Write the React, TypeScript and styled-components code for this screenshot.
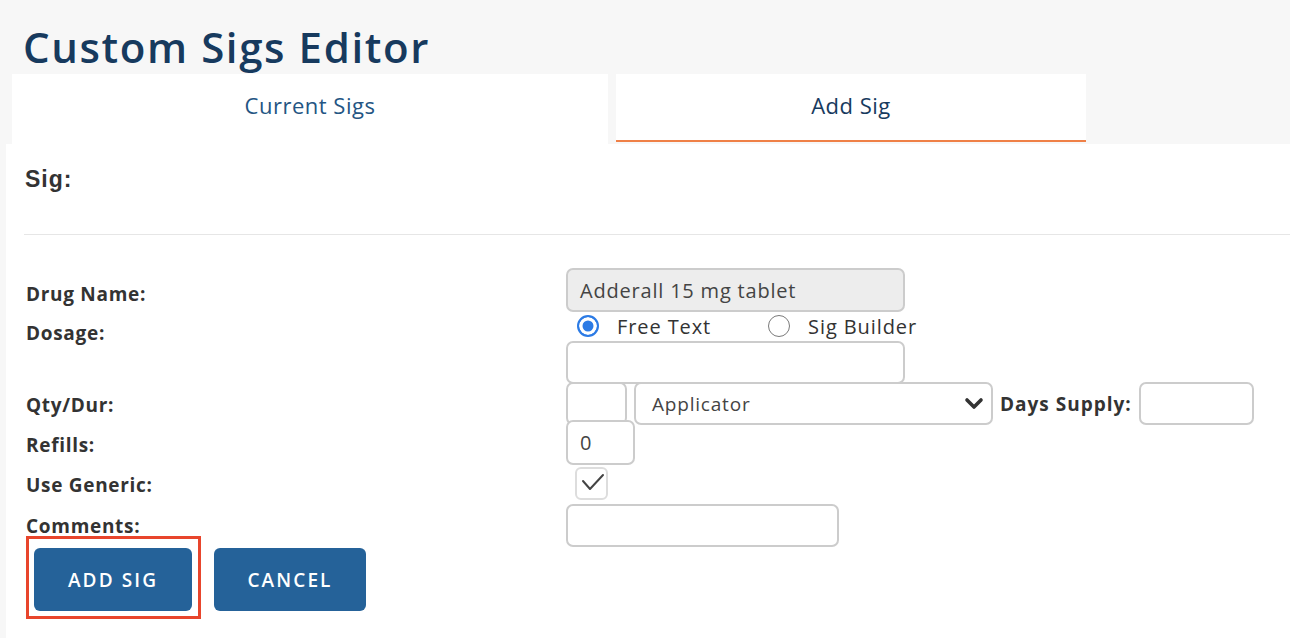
import React from "react";
import styled, { createGlobalStyle } from "styled-components";

const GlobalStyle = createGlobalStyle`
  html, body { margin: 0; padding: 0; background: #f7f7f7; overflow: hidden; }
  * { box-sizing: border-box; }
`;

const Page = styled.div`
  min-height: 100vh;
  display: flex;
  flex-direction: column;
  padding: 22px 0 0 6px;
  font-family: "Open Sans", Arial, sans-serif;
`;

const Title = styled.h1`
  margin: 0 0 2px 17px;
  font-family: "Open Sans", Arial, sans-serif;
  font-weight: 600;
  font-size: 42px;
  line-height: 50px;
  letter-spacing: 1.6px;
  color: #173a5e;
`;

const Tabs = styled.div`
  display: flex;
  align-items: flex-start;
  gap: 8px;
  margin-left: 6px;
  height: 70px;
`;

const Tab = styled.div<{ $active?: boolean; $width: number }>`
  width: ${(p) => p.$width}px;
  height: ${(p) => (p.$active ? 68 : 70)}px;
  background: #fff;
  border-bottom: ${(p) => (p.$active ? "2px solid #ef8047" : "none")};
  padding-top: 16px;
  text-align: center;
  font-family: "Open Sans", Arial, sans-serif;
  font-size: 22px;
  line-height: 30px;
  letter-spacing: 0.5px;
  color: ${(p) => (p.$active ? "#173a5e" : "#245583")};
`;

const Panel = styled.div`
  flex: 1;
  background: #fff;
  padding: 0 0 0 18px;
  display: flex;
  flex-direction: column;
`;

const SectionTitle = styled.div`
  margin-top: 22px;
  padding-left: 1px;
  font-family: "Liberation Sans", Arial, sans-serif;
  font-weight: 700;
  font-size: 23px;
  line-height: 27px;
  letter-spacing: 1px;
  color: #333;
`;

const Divider = styled.div`
  margin-top: 41px;
  height: 1px;
  background: #e6e6e6;
`;

const Form = styled.div`
  margin-top: 33px;
  padding-left: 2px;
  display: flex;
  flex-direction: column;
`;

const Row = styled.div<{ $mt: number }>`
  display: grid;
  grid-template-columns: 540px 1fr;
  margin-top: ${(p) => p.$mt}px;
  align-items: start;
`;

const Label = styled.div<{ $pt: number }>`
  padding-top: ${(p) => p.$pt}px;
  font-family: "Open Sans", Arial, sans-serif;
  font-weight: 700;
  font-size: 19px;
  line-height: 22px;
  letter-spacing: 0.7px;
  color: #333;
  white-space: nowrap;
`;

const Field = styled.div`
  display: flex;
  flex-direction: column;
  align-items: flex-start;
`;

const Inline = styled.div`
  display: flex;
  align-items: center;
  gap: 7px;
`;

const TextInput = styled.div<{ $w: number; $h?: number; $disabled?: boolean }>`
  width: ${(p) => p.$w}px;
  height: ${(p) => p.$h ?? 43}px;
  border: 2px solid #cccccc;
  border-radius: 7px;
  background: ${(p) => (p.$disabled ? "#ededed" : "#fff")};
  display: flex;
  align-items: center;
  padding-left: 12px;
  font-family: "Open Sans", Arial, sans-serif;
  font-size: 20px;
  letter-spacing: 0.8px;
  color: #444;
`;

const RadioRow = styled.div`
  display: flex;
  align-items: center;
  height: 24px;
  margin-top: 2px;
  padding-left: 11px;
`;

const RadioOption = styled.label<{ $gap?: number }>`
  display: flex;
  align-items: center;
  gap: 18px;
  margin-right: ${(p) => p.$gap ?? 0}px;
  font-family: "Open Sans", Arial, sans-serif;
  font-size: 20px;
  letter-spacing: 0.9px;
  color: #333;
`;

const Radio = styled.span<{ $checked?: boolean }>`
  width: 22px;
  height: 22px;
  border-radius: 50%;
  flex: none;
  border: ${(p) => (p.$checked ? "2px solid #2c7be5" : "1.5px solid #7a7a7a")};
  background: ${(p) => (p.$checked ? "#2c7be5" : "#fff")};
  box-shadow: ${(p) => (p.$checked ? "inset 0 0 0 3.5px #fff" : "none")};
`;

const Select = styled.div`
  width: 359px;
  height: 43px;
  border: 2px solid #cccccc;
  border-radius: 7px;
  background: #fff;
  display: flex;
  align-items: center;
  justify-content: space-between;
  padding: 0 6px 0 16px;
  font-family: "Open Sans", Arial, sans-serif;
  font-size: 19px;
  letter-spacing: 0.8px;
  color: #444;
`;

const InlineLabel = styled.span`
  font-family: "Open Sans", Arial, sans-serif;
  font-weight: 700;
  font-size: 19px;
  letter-spacing: 1px;
  color: #333;
  white-space: nowrap;
`;

const CheckBox = styled.div`
  width: 33px;
  height: 33px;
  margin-left: 9px;
  border: 2px solid #dddddd;
  border-radius: 6px;
  background: #fff;
  display: flex;
  align-items: center;
  justify-content: center;
`;

const Actions = styled.div`
  display: flex;
  gap: 22px;
  margin-top: 1px;
  padding-left: 10px;
`;

const ButtonWrap = styled.div`
  position: relative;
`;

const Highlight = styled.div`
  position: absolute;
  top: -12px;
  left: -8px;
  right: -9px;
  bottom: -8px;
  border: 3px solid #e8452c;
  pointer-events: none;
`;

const Button = styled.button<{ $w: number }>`
  width: ${(p) => p.$w}px;
  height: 63px;
  border: none;
  border-radius: 6px;
  background: #256299;
  color: #fff;
  font-family: "Open Sans", Arial, sans-serif;
  font-weight: 600;
  font-size: 19px;
  letter-spacing: 2.1px;
  padding: 0;
  cursor: pointer;
`;

export default function App() {
  return (
    <>
      <GlobalStyle />
      <Page>
        <Title>Custom Sigs Editor</Title>
        <Tabs>
          <Tab $width={596}>Current Sigs</Tab>
          <Tab $width={470} $active>
            Add Sig
          </Tab>
        </Tabs>
        <Panel>
          <SectionTitle>Sig:</SectionTitle>
          <Divider />
          <Form>
            <Row $mt={0}>
              <Label $pt={15}>Drug Name:</Label>
              <Field>
                <TextInput $w={339} $h={44} $disabled>
                  Adderall 15 mg tablet
                </TextInput>
              </Field>
            </Row>
            <Row $mt={0}>
              <Label $pt={10}>Dosage:</Label>
              <Field>
                <RadioRow>
                  <RadioOption $gap={57}>
                    <Radio $checked />
                    Free Text
                  </RadioOption>
                  <RadioOption>
                    <Radio />
                    Sig Builder
                  </RadioOption>
                </RadioRow>
                <TextInput $w={339} style={{ marginTop: 3 }} />
              </Field>
            </Row>
            <Row $mt={-2}>
              <Label $pt={12}>Qty/Dur:</Label>
              <Field>
                <Inline>
                  <TextInput $w={61} />
                  <Select>
                    <span>Applicator</span>
                    <svg width="22" height="22" viewBox="0 0 22 22">
                      <polyline
                        points="4,7 11,14 18,7"
                        fill="none"
                        stroke="#333"
                        strokeWidth="3.6"
                        strokeLinecap="round"
                        strokeLinejoin="round"
                      />
                    </svg>
                  </Select>
                  <InlineLabel>Days Supply:</InlineLabel>
                  <TextInput $w={115} />
                </Inline>
              </Field>
            </Row>
            <Row $mt={-5}>
              <Label $pt={14}>Refills:</Label>
              <Field>
                <TextInput $w={69} $h={45}>
                  0
                </TextInput>
              </Field>
            </Row>
            <Row $mt={2}>
              <Label $pt={7}>Use Generic:</Label>
              <Field>
                <CheckBox>
                  <svg width="29" height="29" viewBox="0 0 29 29">
                    <polyline
                      points="6,12 13,20 26,6"
                      fill="none"
                      stroke="#444"
                      strokeWidth="2"
                      strokeLinecap="round"
                      strokeLinejoin="round"
                    />
                  </svg>
                </CheckBox>
              </Field>
            </Row>
            <Row $mt={4}>
              <Label $pt={11}>Comments:</Label>
              <Field>
                <TextInput $w={273} />
              </Field>
            </Row>
          </Form>
          <Actions>
            <ButtonWrap>
              <Button $w={158}>ADD SIG</Button>
              <Highlight />
            </ButtonWrap>
            <Button $w={152}>CANCEL</Button>
          </Actions>
        </Panel>
      </Page>
    </>
  );
}
